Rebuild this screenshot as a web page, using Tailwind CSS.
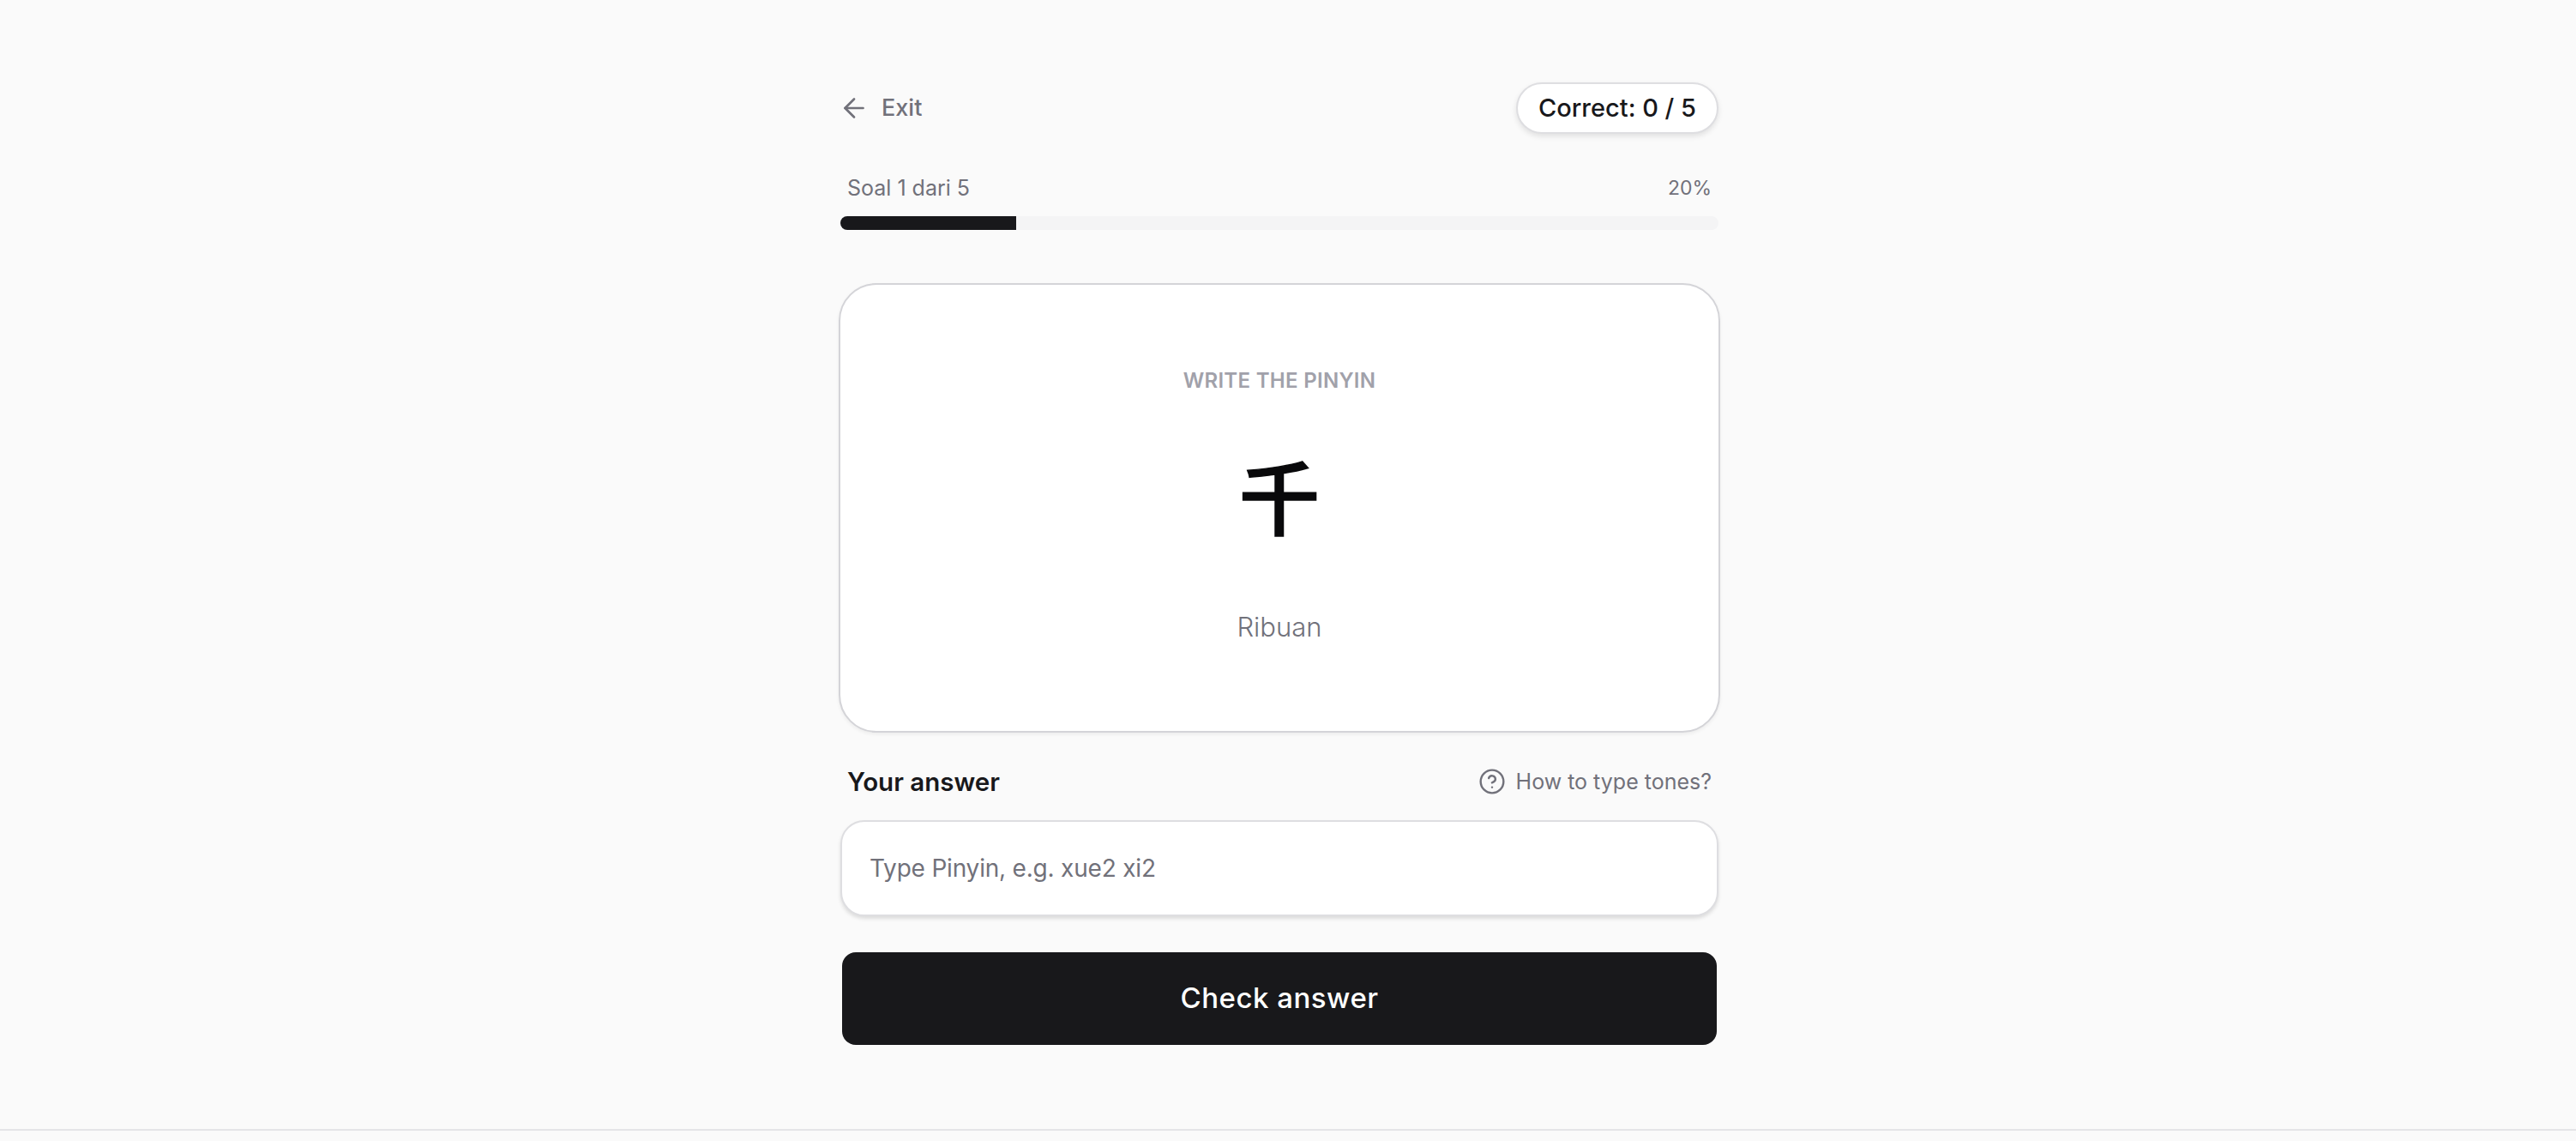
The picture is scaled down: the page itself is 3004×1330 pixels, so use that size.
<!DOCTYPE html>
<html lang="en">
<head>
    <meta charset="UTF-8">
    <title>Pinyin Quiz</title>
    <script src="https://cdn.jsdelivr.net/npm/@tailwindcss/browser@4"></script>
</head>
<body class="bg-[#fafafa] font-['Inter','Noto_Sans_CJK_SC',sans-serif] text-[#18181b]">
<div class="h-[1316px] border-b-2 border-[#e4e4e7] box-content">
    <main class="w-[1024px] ml-[980px] pt-[96px] flex flex-col">
        <!-- top bar -->
        <div class="flex items-center justify-between h-[60px]">
            <button class="flex items-center gap-[14px] text-[#71717a] text-[27px] font-medium">
                <svg class="w-[36px] h-[36px] -ml-[2px]" viewBox="0 0 24 24" fill="none" stroke="currentColor" stroke-width="1.8" stroke-linecap="round" stroke-linejoin="round"><path d="m12 19-7-7 7-7"/><path d="M19 12H5"/></svg>
                <span>Exit</span>
            </button>
            <div class="h-[60px] px-[24px] rounded-full bg-white border-2 border-[#dedee1] shadow-[0_3px_6px_rgba(0,0,0,0.1)] flex items-center text-[29px] font-medium text-[#18181b]">Correct: 0 / 5</div>
        </div>

        <!-- progress -->
        <div class="flex justify-between px-[8px] mt-[45px] h-[36px] items-center text-[25px] leading-none text-[#71717a]">
            <span>Soal 1 dari 5</span>
            <span class="text-[23px]">20%</span>
        </div>
        <div class="mt-[15px] h-[16px] rounded-full bg-[#f4f4f5] overflow-hidden">
            <div class="h-full w-[205px] bg-[#18181b]"></div>
        </div>

        <!-- question card -->
        <div class="mt-[62px] h-[524px] -mx-[2px] bg-white border-2 border-[#d4d4d8] rounded-[44px] shadow-[0_2px_4px_rgba(0,0,0,0.06)] flex flex-col items-center">
            <div class="mt-[94px] h-[36px] flex items-center text-[24px] font-semibold tracking-[0.3px] text-[#a1a1aa]">WRITE THE PINYIN</div>
            <div class="mt-[42px] h-[144px] flex items-center text-[94px] leading-none font-medium font-['Noto_Sans_CJK_SC',sans-serif] text-[#09090b] [-webkit-text-stroke:1.5px_#09090b]">千</div>
            <div class="mt-[62px] h-[42px] flex items-center text-[31px] font-light text-[#71717a]">Ribuan</div>
        </div>

        <!-- answer -->
        <div class="flex items-center justify-between px-[8px] mt-[36px] h-[42px]">
            <label class="text-[29.5px] font-semibold text-[#18181b]">Your answer</label>
            <div class="flex items-center gap-[12px] text-[#71717a] text-[25px]">
                <svg class="w-[32px] h-[32px]" viewBox="0 0 24 24" fill="none" stroke="currentColor" stroke-width="1.8" stroke-linecap="round" stroke-linejoin="round"><circle cx="12" cy="12" r="10"/><path d="M9.09 9a3 3 0 0 1 5.83 1c0 2-3 3-3 3"/><path d="M12 17h.01"/></svg>
                <span class="mt-px">How to type tones?</span>
            </div>
        </div>
        <input type="text" placeholder="Type Pinyin, e.g. xue2 xi2" class="mt-[24px] h-[112px] w-full px-[32px] bg-white border-2 border-[#dedee1] rounded-[28px] shadow-[0_3px_4px_rgba(0,0,0,0.12)] text-[28px] tracking-[-0.2px] placeholder:text-[#71717a] outline-none">
        <button class="mt-[42px] mx-[2px] h-[108px] bg-[#18181b] rounded-[16px] text-white text-[33px] tracking-[0.5px] font-medium">Check answer</button>
    </main>
</div>
</body>
</html>
